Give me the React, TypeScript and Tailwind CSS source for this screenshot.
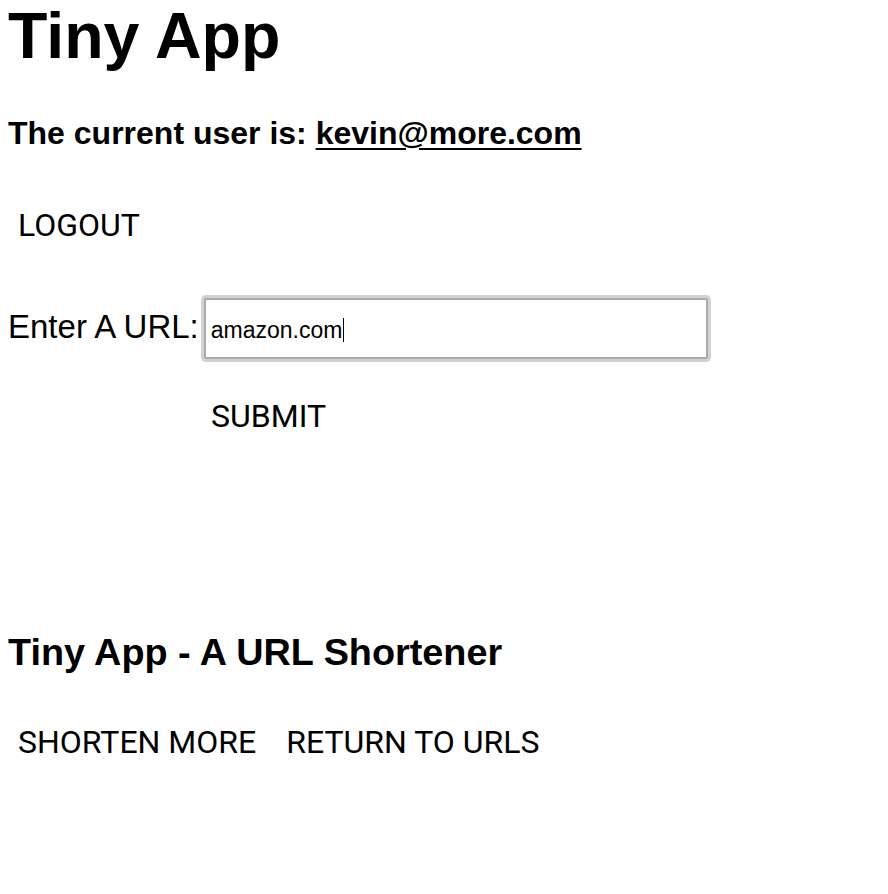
import React from "react";

const arial = "font-['Liberation_Sans',Arial,sans-serif]";
const roboto = "font-['Roboto','Liberation_Sans',sans-serif]";

const TextButton = ({ label }: { label: string }) => (
	<button
		type="button"
		className={`${roboto} px-[10px] text-[32px] leading-[40px] font-normal uppercase text-black bg-transparent`}
	>
		{label}
	</button>
);

const App = () => (
	<div className={`${arial} min-h-[894px] bg-white px-[8px] text-black`}>
		<h1 className="text-[64.5px] leading-[72px] font-bold">Tiny App</h1>

		<h4 className="mt-[41px] text-[32px] leading-[40px] font-bold">
			The current user is:{" "}
			<a href="#" className="underline decoration-[2px] underline-offset-[4px]">
				kevin@more.com
			</a>
		</h4>

		<div className="mt-[52px]">
			<TextButton label="Logout" />
		</div>

		{/* url form */}
		<form className="mt-[53px]">
			<div className="flex items-baseline">
				<label className="text-[33px] leading-[40px] mr-[5px]">Enter A URL:</label>
				<div className="flex items-center w-[504px] h-[61px] pl-[5px] pt-[3px] border-2 border-[#a9a9a9] rounded-[2px] shadow-[0_0_0_3px_#d2d2d2] bg-white">
					<span className="text-[23px] leading-[27px]">amazon.com</span>
					<span className="inline-block w-[1px] h-[24px] ml-[1px] bg-black" />
				</div>
			</div>
			<div className="mt-[37px] pl-[193px]">
				<TextButton label="Submit" />
			</div>
		</form>

		<h3 className="mt-[194px] text-[37.8px] leading-[44px] font-bold">
			Tiny App - A URL Shortener
		</h3>

		<div className="mt-[48px] flex gap-[10px]">
			<TextButton label="Shorten More" />
			<TextButton label="Return to URLs" />
		</div>
	</div>
);

export default App;
